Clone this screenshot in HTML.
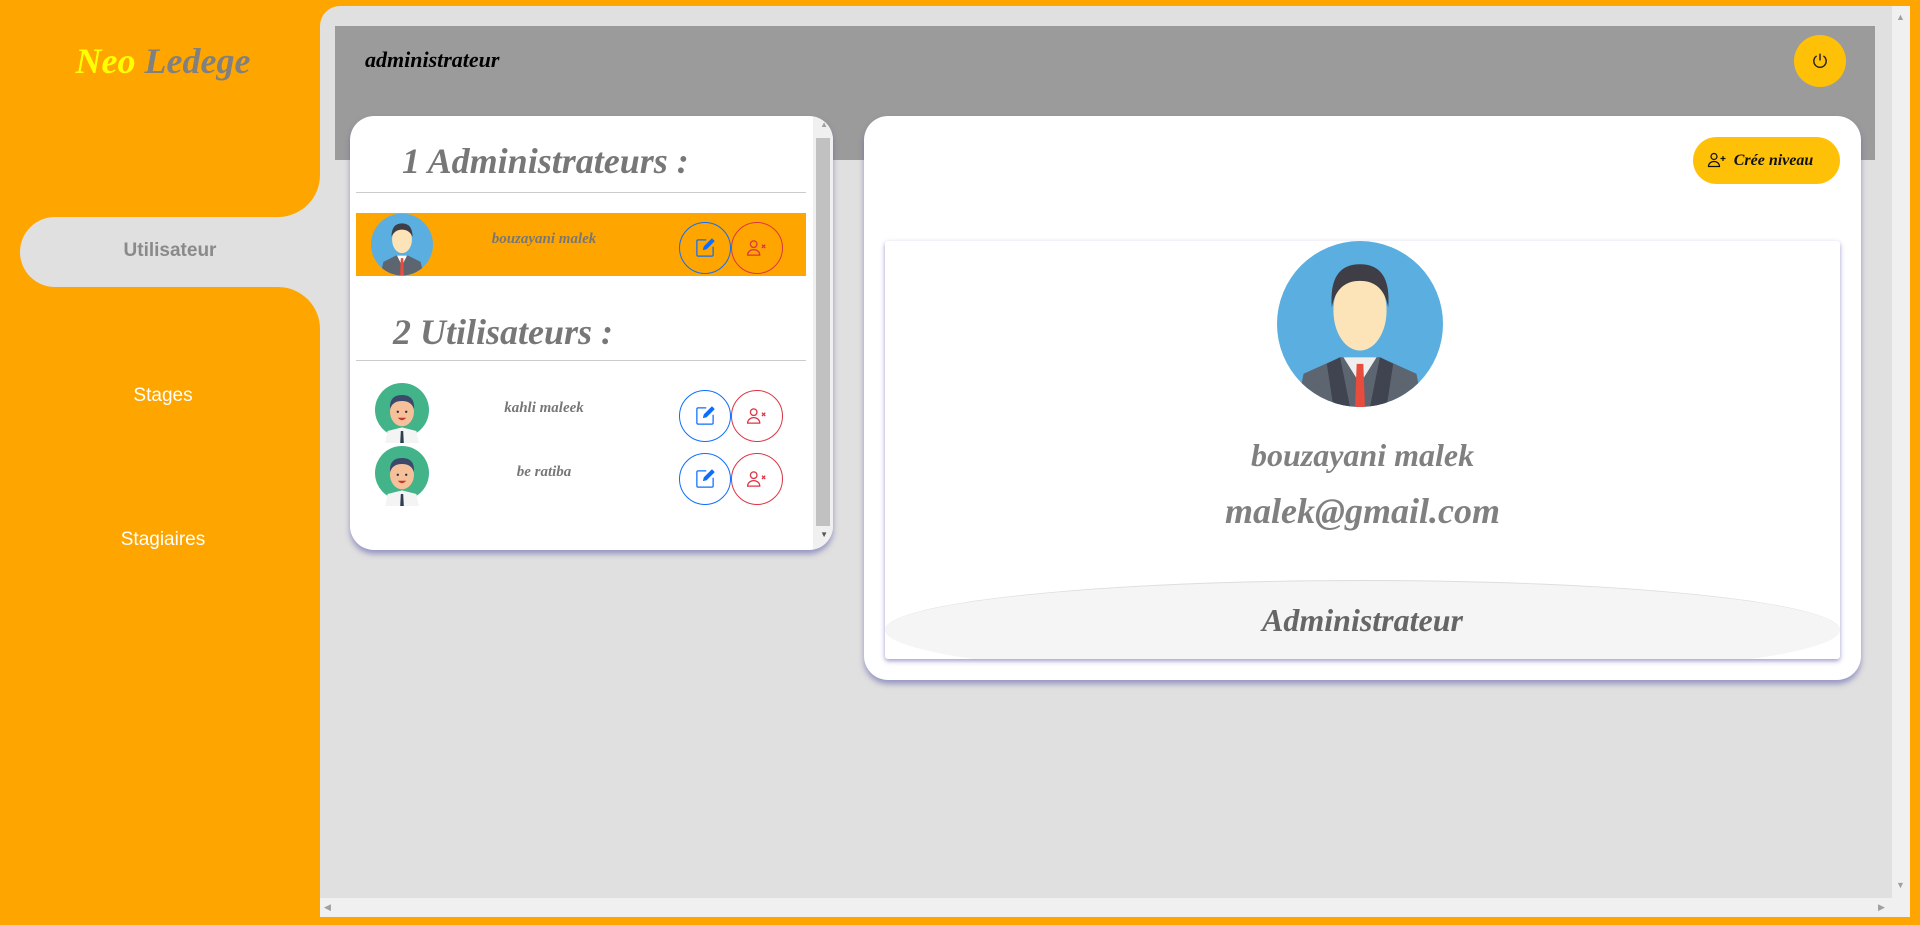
<!DOCTYPE html>
<html><head><meta charset="utf-8"><style>
*{margin:0;padding:0;box-sizing:border-box}
body{width:1920px;height:925px;overflow:hidden;background:#ffa500;position:relative;font-family:"Liberation Sans",sans-serif}
.a{position:absolute}
.cur{font-family:"Liberation Serif",serif;font-style:italic;font-weight:bold}
.btn{position:absolute;width:52px;height:52px;border-radius:50%;background:transparent}
.ed{border:1.5px solid #0d6efd}
.dl{border:1.5px solid #dc3545}
.btn svg{position:absolute;left:50%;top:50%;transform:translate(-50%,-50%)}
</style></head><body>
<div class="a" style="left:320px;top:6px;width:1572px;height:892px;background:#e0e0e0;border-top-left-radius:20px"></div>
<div class="a" style="left:240px;top:160px;width:90px;height:180px;background:#e0e0e0"></div>
<div class="a" style="left:0;top:0;width:320px;height:217px;background:#ffa500;border-bottom-right-radius:42px"></div>
<div class="a" style="left:0;top:287px;width:320px;height:638px;background:#ffa500;border-top-right-radius:42px"></div>
<div class="a" style="left:20px;top:217px;width:310px;height:70px;background:#e0e0e0;border-radius:35px 0 0 35px"></div>
<div class="a cur" style="left:0;width:326px;top:40px;text-align:center;font-size:36px"><span style="color:#ffff00">Neo</span> <span style="color:#808080">Ledege</span></div>
<div class="a" style="left:20px;width:300px;top:240px;text-align:center;font-size:19px;font-weight:bold;color:#8a8a8a">Utilisateur</div>
<div class="a" style="left:0;width:326px;top:385px;text-align:center;font-size:19px;color:#fff">Stages</div>
<div class="a" style="left:0;width:326px;top:529px;text-align:center;font-size:19px;color:#fff">Stagiaires</div>
<div class="a" style="left:1892px;top:6px;width:18px;height:911px;background:#f0f0f0"></div>
<div class="a" style="left:1896px;top:12px;color:#a0a0a0;font-size:9px">▲</div>
<div class="a" style="left:1896px;top:880px;color:#a0a0a0;font-size:9px">▼</div>
<div class="a" style="left:320px;top:898px;width:1572px;height:19px;background:#f0f0f0"></div>
<div class="a" style="left:324px;top:902px;color:#a0a0a0;font-size:9px">◀</div>
<div class="a" style="left:1878px;top:902px;color:#a0a0a0;font-size:9px">▶</div>
<div class="a" style="left:335px;top:26px;width:1540px;height:134px;background:#9b9b9b"></div>
<div class="a cur" style="left:365px;top:47px;font-size:22px;color:#000">administrateur</div>
<div class="a" style="left:1794px;top:35px;width:52px;height:52px;border-radius:50%;background:#ffc107">
<svg width="18" height="18" viewBox="0 0 16 16" style="position:absolute;left:17px;top:17px" fill="none" stroke="#222" stroke-width="1.3"><path d="M8 1.5v6"/><path d="M5 3.5a5.5 5.5 0 1 0 6 0"/></svg></div>
<div class="a" style="left:350px;top:116px;width:483px;height:434px;background:#fff;border-radius:24px;box-shadow:0 4px 6px rgba(90,90,170,.55);overflow:hidden">
<div class="a" style="right:0;top:0;width:20px;height:434px;background:#f0f0f0"></div>
<div class="a" style="right:3px;top:22px;width:14px;height:388px;background:#c1c1c1"></div>
<div class="a" style="right:5px;top:4px;color:#a0a0a0;font-size:8px">▲</div>
<div class="a" style="right:5px;top:414px;color:#555;font-size:8px">▼</div>
<div class="a cur" style="left:52px;top:24px;font-size:36px;color:#777">1 Administrateurs :</div>
<div class="a" style="left:6px;top:76px;width:450px;height:1px;background:#ccc"></div>
<div class="a" style="left:6px;top:97px;width:450px;height:63px;background:#ffa500"></div>
<div class="a cur" style="left:43px;top:195px;font-size:36px;color:#777">2 Utilisateurs :</div>
<div class="a" style="left:6px;top:244px;width:450px;height:1px;background:#ccc"></div>
</div>
<svg class="a" style="left:371px;top:213px" width="62" height="63" viewBox="0 0 100 100"><defs><clipPath id="c1"><ellipse cx="50" cy="50" rx="50" ry="50"/></clipPath></defs><g clip-path="url(#c1)"><rect width="100" height="100" fill="#5aafe0"/><path d="M15 100 L20 78 L40 68 L60 68 L80 78 L85 100Z" fill="#5d6570"/><path d="M42 68 L50 84 L58 68Z" fill="#fff"/><path d="M48 72 L52 72 L53 100 L47 100Z" fill="#e74c3c"/><ellipse cx="50" cy="42" rx="16" ry="22" fill="#fde4b8"/><path d="M33 38 Q33 16 50 16 Q67 16 67 38 Q62 26 50 26 Q38 26 33 38Z" fill="#3f3d45"/></g></svg>
<div class="a cur" style="left:434px;width:220px;text-align:center;top:231px;font-size:15px;color:#777">bouzayani malek</div>
<div class="btn ed" style="left:679px;top:222px"><svg width="20" height="20" viewBox="0 0 16 16" fill="#0d6efd"><path d="M15.5 2.1 13.9.5a.5.5 0 0 0-.7 0L7 6.7 6.3 9.7l3-.7 6.2-6.2a.5.5 0 0 0 0-.7z"/><path d="M1 2.5A1.5 1.5 0 0 1 2.5 1H9v1H2.5a.5.5 0 0 0-.5.5v11a.5.5 0 0 0 .5.5h11a.5.5 0 0 0 .5-.5V7h1v6.5A1.5 1.5 0 0 1 13.5 15h-11A1.5 1.5 0 0 1 1 13.5z"/></svg></div>
<div class="btn dl" style="left:731px;top:222px"><svg width="22" height="18" viewBox="0 0 20 16" fill="none" stroke="#dc3545" stroke-width="1.2"><circle cx="7" cy="4.5" r="3"/><path d="M1.5 14.5c0-3 2.5-5 5.5-5s5.5 2 5.5 5z"/><path d="M14.5 5l3 3M17.5 5l-3 3"/></svg></div>
<svg class="a" style="left:372px;top:383px" width="60" height="60" viewBox="0 0 100 100"><circle cx="50" cy="45" r="45" fill="#43b38a"/><path d="M22 100 L26 80 L50 74 L74 80 L78 100Z" fill="#f4f4f4"/><path d="M48 80h4l1 20h-6z" fill="#2c3e50"/><ellipse cx="50" cy="48" rx="20" ry="24" fill="#f6c09a"/><path d="M30 44 Q28 20 50 20 Q72 20 70 44 Q66 30 50 30 Q34 30 30 44Z" fill="#3b4a6b"/><circle cx="43" cy="48" r="2" fill="#333"/><circle cx="57" cy="48" r="2" fill="#333"/><path d="M43 58 Q50 66 57 58Z" fill="#c0392b"/></svg>
<div class="a cur" style="left:434px;width:220px;text-align:center;top:400px;font-size:15px;color:#777">kahli maleek</div>
<div class="btn ed" style="left:679px;top:390px"><svg width="20" height="20" viewBox="0 0 16 16" fill="#0d6efd"><path d="M15.5 2.1 13.9.5a.5.5 0 0 0-.7 0L7 6.7 6.3 9.7l3-.7 6.2-6.2a.5.5 0 0 0 0-.7z"/><path d="M1 2.5A1.5 1.5 0 0 1 2.5 1H9v1H2.5a.5.5 0 0 0-.5.5v11a.5.5 0 0 0 .5.5h11a.5.5 0 0 0 .5-.5V7h1v6.5A1.5 1.5 0 0 1 13.5 15h-11A1.5 1.5 0 0 1 1 13.5z"/></svg></div>
<div class="btn dl" style="left:731px;top:390px"><svg width="22" height="18" viewBox="0 0 20 16" fill="none" stroke="#dc3545" stroke-width="1.2"><circle cx="7" cy="4.5" r="3"/><path d="M1.5 14.5c0-3 2.5-5 5.5-5s5.5 2 5.5 5z"/><path d="M14.5 5l3 3M17.5 5l-3 3"/></svg></div>
<svg class="a" style="left:372px;top:446px" width="60" height="60" viewBox="0 0 100 100"><circle cx="50" cy="45" r="45" fill="#43b38a"/><path d="M22 100 L26 80 L50 74 L74 80 L78 100Z" fill="#f4f4f4"/><path d="M48 80h4l1 20h-6z" fill="#2c3e50"/><ellipse cx="50" cy="48" rx="20" ry="24" fill="#f6c09a"/><path d="M30 44 Q28 20 50 20 Q72 20 70 44 Q66 30 50 30 Q34 30 30 44Z" fill="#3b4a6b"/><circle cx="43" cy="48" r="2" fill="#333"/><circle cx="57" cy="48" r="2" fill="#333"/><path d="M43 58 Q50 66 57 58Z" fill="#c0392b"/></svg>
<div class="a cur" style="left:434px;width:220px;text-align:center;top:464px;font-size:15px;color:#777">be ratiba</div>
<div class="btn ed" style="left:679px;top:453px"><svg width="20" height="20" viewBox="0 0 16 16" fill="#0d6efd"><path d="M15.5 2.1 13.9.5a.5.5 0 0 0-.7 0L7 6.7 6.3 9.7l3-.7 6.2-6.2a.5.5 0 0 0 0-.7z"/><path d="M1 2.5A1.5 1.5 0 0 1 2.5 1H9v1H2.5a.5.5 0 0 0-.5.5v11a.5.5 0 0 0 .5.5h11a.5.5 0 0 0 .5-.5V7h1v6.5A1.5 1.5 0 0 1 13.5 15h-11A1.5 1.5 0 0 1 1 13.5z"/></svg></div>
<div class="btn dl" style="left:731px;top:453px"><svg width="22" height="18" viewBox="0 0 20 16" fill="none" stroke="#dc3545" stroke-width="1.2"><circle cx="7" cy="4.5" r="3"/><path d="M1.5 14.5c0-3 2.5-5 5.5-5s5.5 2 5.5 5z"/><path d="M14.5 5l3 3M17.5 5l-3 3"/></svg></div>
<div class="a" style="left:864px;top:116px;width:997px;height:564px;background:#fff;border-radius:24px;box-shadow:0 4px 6px rgba(90,90,170,.55)"></div>
<div class="a cur" style="left:1693px;top:137px;width:147px;height:47px;border-radius:24px;background:#ffc107;color:#111;font-size:16px;line-height:47px;text-align:center;padding-left:14px">Crée niveau
<svg width="20" height="18" viewBox="0 0 20 16" fill="none" stroke="#111" stroke-width="1.2" style="position:absolute;left:14px;top:14px"><circle cx="7" cy="4.5" r="3"/><path d="M1.5 14.5c0-3 2.5-5 5.5-5s5.5 2 5.5 5z"/><path d="M16 4v5M13.5 6.5h5"/></svg></div>
<div class="a" style="left:885px;top:241px;width:955px;height:418px;background:#fff;border-radius:3px;box-shadow:0 2px 5px rgba(90,90,170,.6);overflow:hidden">
<div class="a" style="left:0;top:339px;width:955px;height:100px;background:#f5f5f5;border-radius:50%;border-top:1px solid #ddd"></div>
<div class="a cur" style="left:0;width:955px;text-align:center;top:361px;font-size:32px;color:#666">Administrateur</div>
<div class="a cur" style="left:0;width:955px;text-align:center;top:196px;font-size:32px;color:#808080">bouzayani malek</div>
<div class="a cur" style="left:0;width:955px;text-align:center;top:249px;font-size:36px;color:#808080">malek@gmail.com</div>
</div>
<svg class="a" style="left:1277px;top:241px" width="166" height="166" viewBox="0 0 100 100"><defs><clipPath id="c2"><circle cx="50" cy="50" r="50"/></clipPath></defs><g clip-path="url(#c2)"><rect width="100" height="100" fill="#5aafe0"/><path d="M12 100 L16 80 L38 70 L62 70 L84 80 L88 100Z" fill="#5d6570"/><path d="M30 74 L38 70 L44 100 L34 100Z M70 74 L62 70 L56 100 L66 100Z" fill="#3f4450"/><path d="M40 70 L50 86 L60 70Z" fill="#eee"/><path d="M48 74 L52 74 L53 100 L47 100Z" fill="#e74c3c"/><ellipse cx="50" cy="42" rx="16" ry="24" fill="#fde4b8"/><path d="M33 40 Q31 14 50 14 Q69 14 67 40 Q64 24 50 24 Q36 24 33 40Z" fill="#3f3d45"/></g></svg>
</body></html>
